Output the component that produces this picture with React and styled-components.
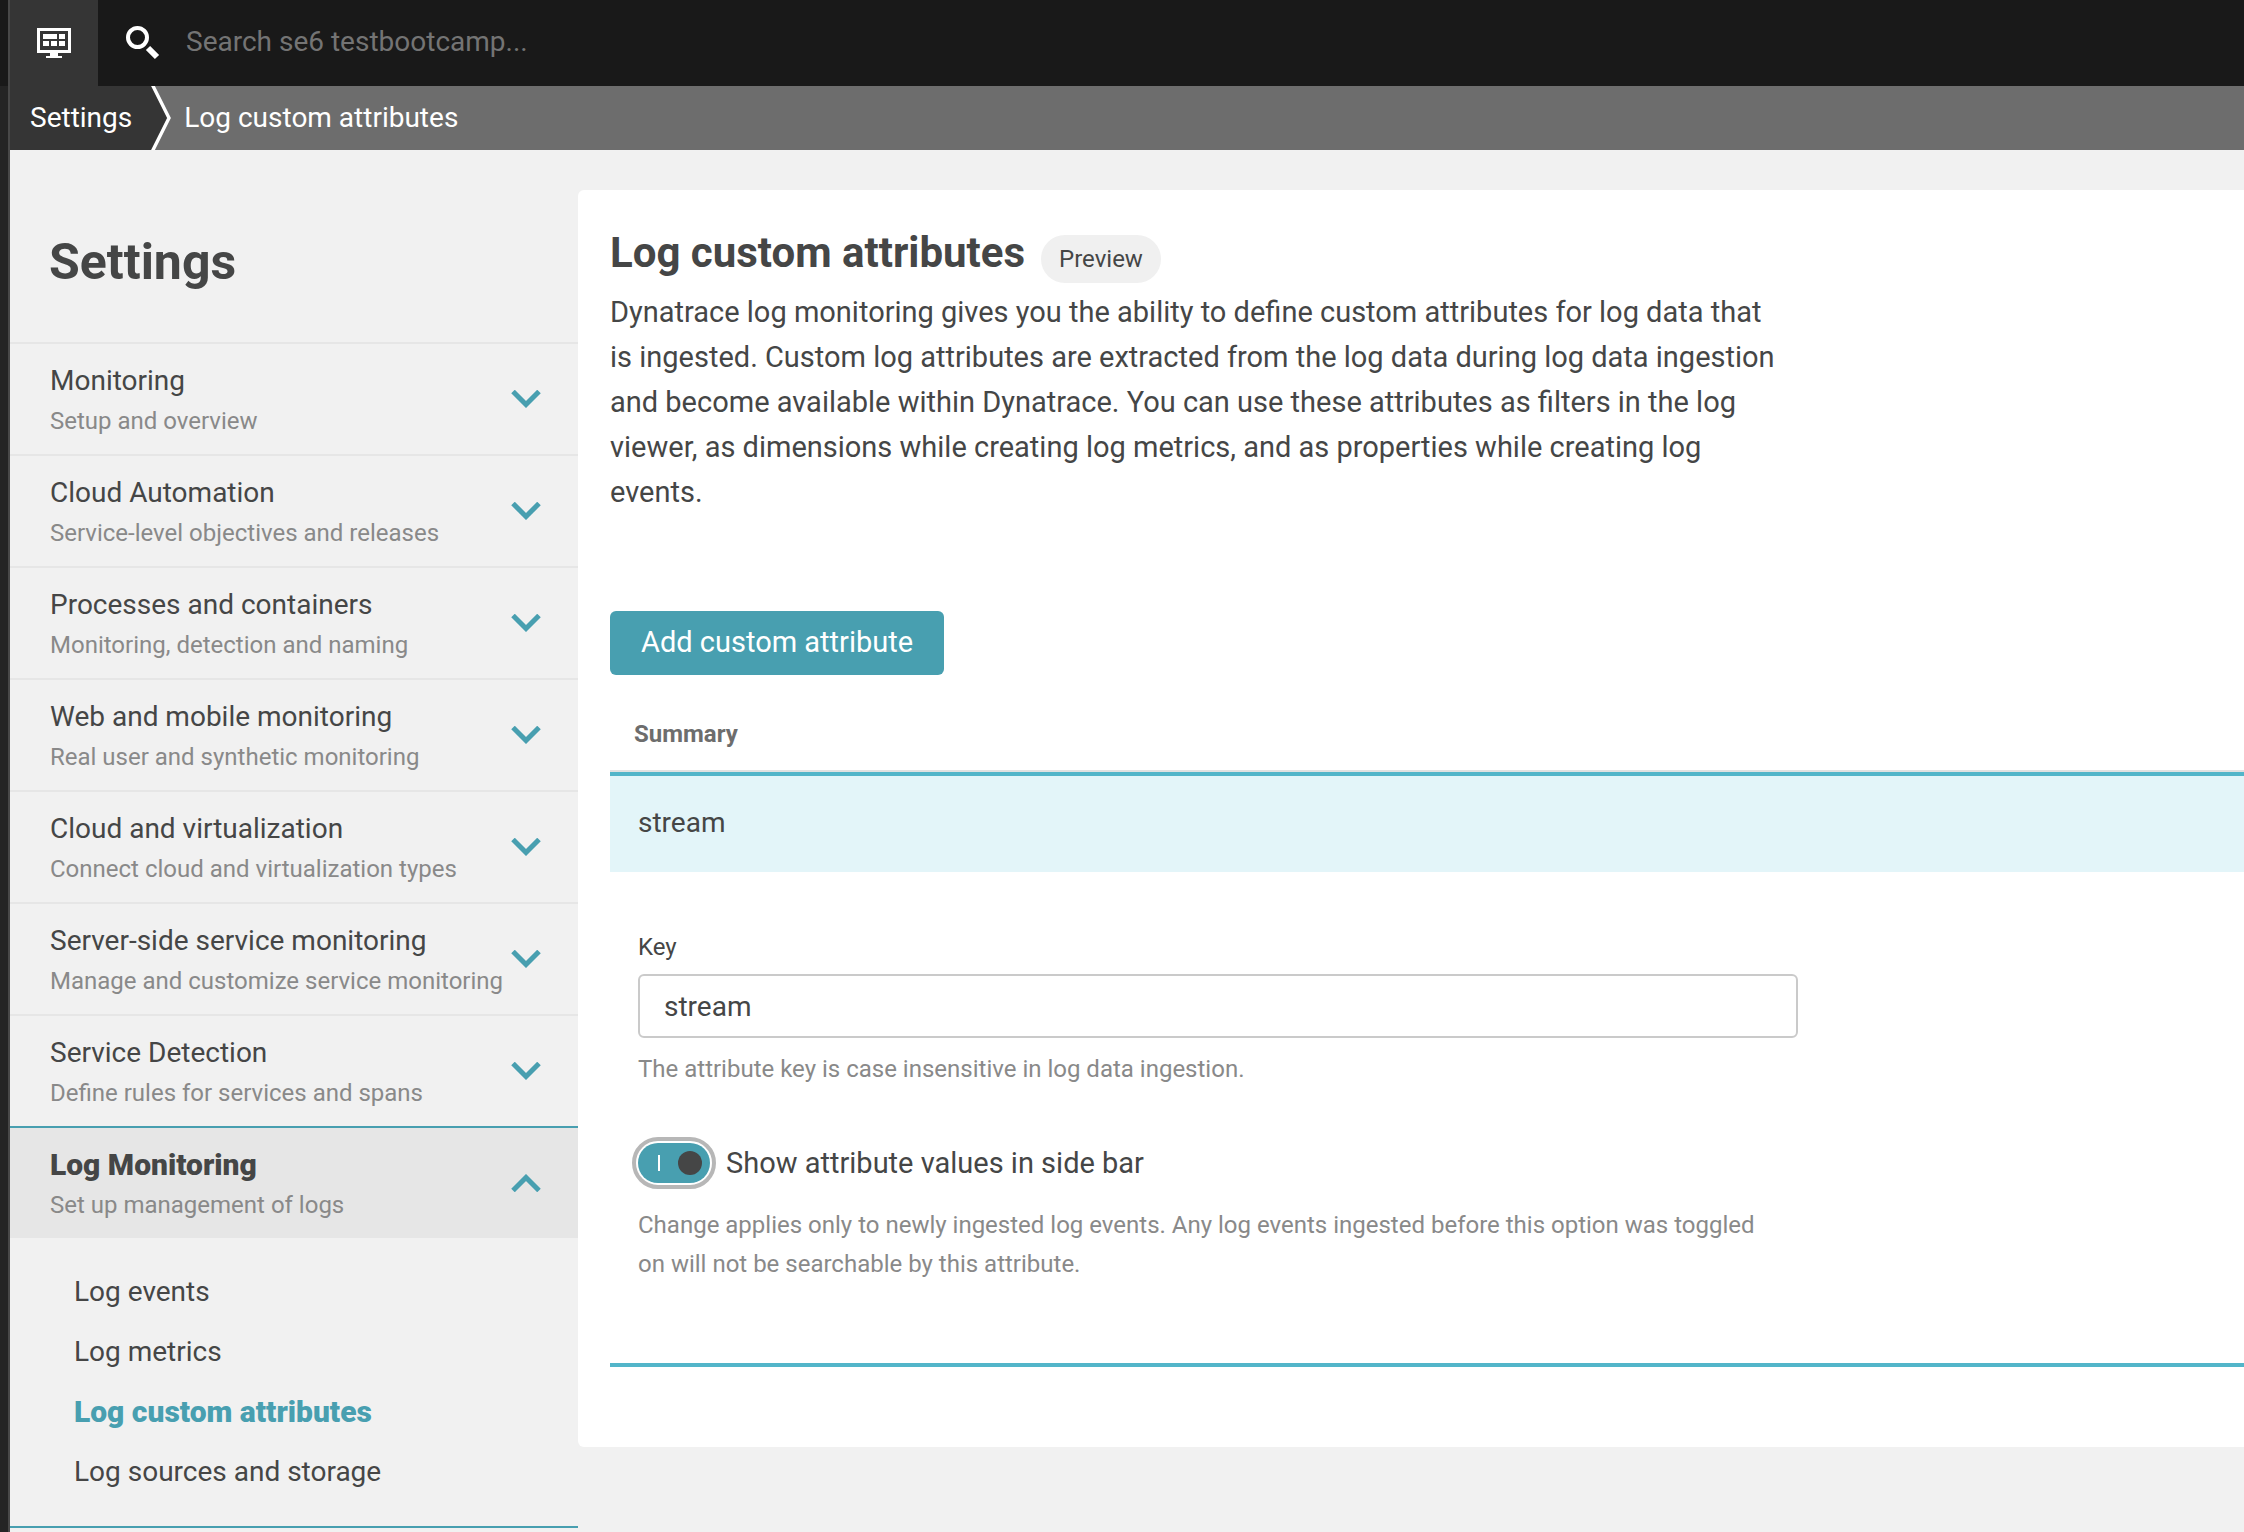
import React, { useState } from "react";
import styled, { createGlobalStyle, ThemeProvider } from "styled-components";

const theme = {
  ink: "#454646",
  muted: "#898989",
  teal: "#489fb0",
  tealLine: "#52b5c9",
  tealTint: "#e3f5f9",
  page: "#f1f1f1",
  line: "#e6e6e6",
  text: "28px",
  copy: "29px",
  strong: "30px",
  small: "24px",
};

const GlobalStyle = createGlobalStyle`
  *, *::before, *::after { box-sizing: border-box; }
  body {
    margin: 0;
    background: ${theme.page};
    color: ${theme.ink};
    font: 400 ${theme.text}/44px Roboto, "Open Sans", sans-serif;
  }
  h1, h2, p, ul { margin: 0; padding: 0; }
  ul { list-style: none; }
  button, input { font: inherit; color: inherit; }
  a { color: inherit; text-decoration: none; }
`;

const Page = styled.div`
  display: flex;
  min-height: 100vh;
`;

const Rail = styled.div`
  flex: none;
  display: flex;
  flex-direction: column;
  width: 10px;
  background: #242424;
  border-right: 2px solid #484848;
`;

const RailCap = styled.div`
  height: 86px;
  background: #191919;
`;

const Shell = styled.div`
  flex: 1;
  min-width: 0;
  display: flex;
  flex-direction: column;
`;

const TopBar = styled.header`
  display: flex;
  height: 86px;
  background: #191919;
`;

const HomeButton = styled.button`
  display: grid;
  place-items: center;
  width: 88px;
  padding: 0;
  border: 0;
  background: #353535;
`;

const Search = styled.label`
  flex: 1;
  display: flex;
  align-items: center;
  gap: 26px;
  padding-left: 28px;
`;

const SearchInput = styled.input`
  flex: 1;
  min-width: 0;
  height: 64px;
  padding: 0 0 4px;
  border: 0;
  outline: 0;
  background: transparent;
  color: #fff;
  &::placeholder { color: #747474; opacity: 1; }
`;

const Crumbs = styled.nav`
  display: flex;
  height: 64px;
  line-height: 64px;
  background: #6d6d6d;
  color: #fff;
`;

const CrumbRoot = styled.a`
  padding: 0 18px 0 20px;
  background: #353535;
`;

const CrumbCurrent = styled.a`
  padding-left: 12px;
`;

const Body = styled.div`
  flex: 1;
  display: flex;
  align-items: flex-start;
`;

const Sidebar = styled.aside`
  flex: none;
  width: 568px;
`;

const SidebarTitle = styled.h1`
  padding: 82px 39px 50px;
  font-size: 50px;
  line-height: 60px;
`;

const Group = styled.button`
  display: flex;
  align-items: center;
  justify-content: space-between;
  width: 100%;
  height: 112px;
  padding: 0 37px 0 40px;
  border: 0;
  border-top: 2px solid ${(p) => (p.$open ? p.theme.teal : p.theme.line)};
  background: ${(p) => (p.$open ? "#e6e6e6" : "transparent")};
  text-align: left;
`;

const GroupText = styled.span`
  flex: 1;
  display: grid;
  padding-top: 2px;
  white-space: nowrap;
`;

const GroupName = styled.span`
  line-height: 42px;
  font-size: ${(p) => (p.$open ? p.theme.strong : p.theme.text)};
  font-weight: ${(p) => (p.$open ? 900 : 400)};
`;

const GroupHint = styled.span`
  font-size: ${(p) => p.theme.small};
  line-height: 38px;
  color: ${(p) => p.theme.muted};
`;

const SubList = styled.ul`
  padding: 24px 0 24px 64px;
  border-bottom: 2px solid ${(p) => p.theme.teal};
`;

const SubLink = styled.a`
  display: block;
  line-height: 60px;
  font-size: ${(p) => (p.$active ? p.theme.strong : p.theme.text)};
  font-weight: ${(p) => (p.$active ? 900 : 400)};
  color: ${(p) => (p.$active ? p.theme.teal : "inherit")};
`;

const Card = styled.main`
  flex: 1;
  min-width: 0;
  margin-top: 40px;
  padding: 38px 0 80px 32px;
  border-radius: 6px 0 0 6px;
  background: #fff;
`;

const Heading = styled.div`
  display: flex;
  align-items: baseline;
  gap: 16px;
`;

const Title = styled.h2`
  font-size: 42px;
  line-height: 50px;
`;

const Pill = styled.span`
  padding: 0 18px;
  border-radius: 24px;
  background: #f0f0f0;
  font-size: ${(p) => p.theme.small};
  line-height: 48px;
`;

const Intro = styled.p`
  max-width: 1170px;
  padding-top: 7px;
  font-size: ${(p) => p.theme.copy};
  line-height: 45px;
`;

const AddButton = styled.button`
  display: block;
  height: 64px;
  margin: 96px 0 24px;
  padding: 0 31px 2px;
  border: 0;
  border-radius: 6px;
  background: ${(p) => p.theme.teal};
  color: #fff;
  font-size: ${(p) => p.theme.copy};
`;

const Table = styled.table`
  width: 100%;
  border-collapse: separate;
  border-spacing: 0;
  text-align: left;
`;

const HeadCell = styled.th`
  padding: 17px 24px 18px;
  border-bottom: 2px solid #e1e1e1;
  font-size: ${(p) => p.theme.small};
  line-height: 36px;
  color: #6d6d6d;
`;

const SummaryCell = styled.td`
  padding: 25px 28px 27px;
  border-top: 4px solid ${(p) => p.theme.tealLine};
  background: ${(p) => p.theme.tealTint};
`;

const DetailCell = styled.td`
  padding: 57px 28px 79px;
  border-bottom: 4px solid ${(p) => p.theme.tealLine};
`;

const Form = styled.div`
  display: grid;
  max-width: 1160px;
`;

const KeyLabel = styled.label`
  font-size: ${(p) => p.theme.small};
  line-height: 36px;
`;

const KeyInput = styled.input`
  width: 100%;
  height: 64px;
  margin: 9px 0 12px;
  padding: 0 24px;
  border: 2px solid #cacaca;
  border-radius: 6px;
  outline: 0;
  background: #fff;
`;

const Hint = styled.p`
  max-width: 1140px;
  font-size: ${(p) => p.theme.small};
  line-height: 39px;
  color: ${(p) => p.theme.muted};
`;

const SwitchRow = styled.label`
  display: flex;
  align-items: center;
  gap: 16px;
  margin: 52px 0 21px;
  font-size: ${(p) => p.theme.copy};
`;

const Switch = styled.input`
  appearance: none;
  display: flex;
  align-items: center;
  justify-content: space-between;
  width: 72px;
  height: 40px;
  margin: 0;
  padding: 0 8px 0 20px;
  border-radius: 20px;
  outline: 4px solid #b7b7b7;
  outline-offset: 2px;
  background: #b7b7b7;
  &::before {
    content: "";
    width: 2px;
    height: 16px;
    background: #fff;
  }
  &::after {
    content: "";
    width: 24px;
    height: 24px;
    border-radius: 50%;
    background: ${(p) => p.theme.ink};
  }
  &:checked { background: ${(p) => p.theme.teal}; }
  &:not(:checked) {
    flex-direction: row-reverse;
    padding: 0 20px 0 8px;
  }
`;

const MonitorIcon = () => (
  <svg width="34" height="30" viewBox="0 0 34 30" fill="#fff" aria-hidden="true">
    <path fillRule="evenodd" d="M0 0h34v25H21v3h4v2H9v-2h4v-3H0zM3 3v19h28V3z" />
    <path d="M6 6h14v5H6zM22 6h6v5h-6zM6 13h6v5H6zM14 13h6v5h-6zM22 13h6v5h-6z" />
  </svg>
);

const SearchIcon = () => (
  <svg width="34" height="34" viewBox="0 0 34 34" fill="none" stroke="#fff" aria-hidden="true">
    <circle cx="11.5" cy="11.5" r="9.5" strokeWidth="4" />
    <path d="M22 22l9 9" strokeWidth="6" />
  </svg>
);

const CrumbArrow = () => (
  <svg width="22" height="64" viewBox="0 0 22 64" aria-hidden="true">
    <path d="M0 0h2l17 32L2 64H0z" fill="#353535" />
    <path d="M2-2l17 34L2 66" fill="none" stroke="#fff" strokeWidth="3.4" />
  </svg>
);

const Chevron = ({ up }) => (
  <svg width="30" height="18" viewBox="0 0 30 18" fill="none" stroke={theme.teal} strokeWidth="5" aria-hidden="true">
    <path d={up ? "M2 16.5L15 3.5L28 16.5" : "M2 1.5L15 14.5L28 1.5"} />
  </svg>
);

const groups = [
  ["Monitoring", "Setup and overview"],
  ["Cloud Automation", "Service-level objectives and releases"],
  ["Processes and containers", "Monitoring, detection and naming"],
  ["Web and mobile monitoring", "Real user and synthetic monitoring"],
  ["Cloud and virtualization", "Connect cloud and virtualization types"],
  ["Server-side service monitoring", "Manage and customize service monitoring"],
  ["Service Detection", "Define rules for services and spans"],
  ["Log Monitoring", "Set up management of logs", ["Log events", "Log metrics", "Log custom attributes", "Log sources and storage"]],
];

function SidebarGroup({ name, hint, items }) {
  const open = Boolean(items);
  return (
    <>
      <Group type="button" $open={open} aria-expanded={open}>
        <GroupText>
          <GroupName $open={open}>{name}</GroupName>
          <GroupHint>{hint}</GroupHint>
        </GroupText>
        <Chevron up={open} />
      </Group>
      {open && (
        <SubList>
          {items.map((item) => (
            <li key={item}>
              <SubLink href="#" $active={item === "Log custom attributes"}>{item}</SubLink>
            </li>
          ))}
        </SubList>
      )}
    </>
  );
}

export default function App() {
  const [key, setKey] = useState("stream");
  const [shown, setShown] = useState(true);
  return (
    <ThemeProvider theme={theme}>
      <GlobalStyle />
      <Page>
        <Rail><RailCap /></Rail>
        <Shell>
          <TopBar>
            <HomeButton type="button" aria-label="Dashboards"><MonitorIcon /></HomeButton>
            <Search>
              <SearchIcon />
              <SearchInput type="text" aria-label="Search" placeholder="Search se6 testbootcamp..." />
            </Search>
          </TopBar>
          <Crumbs>
            <CrumbRoot href="#">Settings</CrumbRoot>
            <CrumbArrow />
            <CrumbCurrent href="#">Log custom attributes</CrumbCurrent>
          </Crumbs>
          <Body>
            <Sidebar>
              <SidebarTitle>Settings</SidebarTitle>
              {groups.map(([name, hint, items]) => (
                <SidebarGroup key={name} name={name} hint={hint} items={items} />
              ))}
            </Sidebar>
            <Card>
              <Heading>
                <Title>Log custom attributes</Title>
                <Pill>Preview</Pill>
              </Heading>
              <Intro>
                Dynatrace log monitoring gives you the ability to define custom attributes for log data that
                is ingested. Custom log attributes are extracted from the log data during log data ingestion
                and become available within Dynatrace. You can use these attributes as filters in the log
                viewer, as dimensions while creating log metrics, and as properties while creating log
                events.
              </Intro>
              <AddButton type="button">Add custom attribute</AddButton>
              <Table>
                <thead>
                  <tr><HeadCell scope="col">Summary</HeadCell></tr>
                </thead>
                <tbody>
                  <tr><SummaryCell>stream</SummaryCell></tr>
                  <tr>
                    <DetailCell>
                      <Form>
                        <KeyLabel htmlFor="attribute-key">Key</KeyLabel>
                        <KeyInput id="attribute-key" type="text" value={key} onChange={(e) => setKey(e.target.value)} />
                        <Hint>The attribute key is case insensitive in log data ingestion.</Hint>
                        <SwitchRow>
                          <Switch type="checkbox" checked={shown} onChange={(e) => setShown(e.target.checked)} />
                          Show attribute values in side bar
                        </SwitchRow>
                        <Hint>
                          Change applies only to newly ingested log events. Any log events ingested before this option was toggled
                          on will not be searchable by this attribute.
                        </Hint>
                      </Form>
                    </DetailCell>
                  </tr>
                </tbody>
              </Table>
            </Card>
          </Body>
        </Shell>
      </Page>
    </ThemeProvider>
  );
}
